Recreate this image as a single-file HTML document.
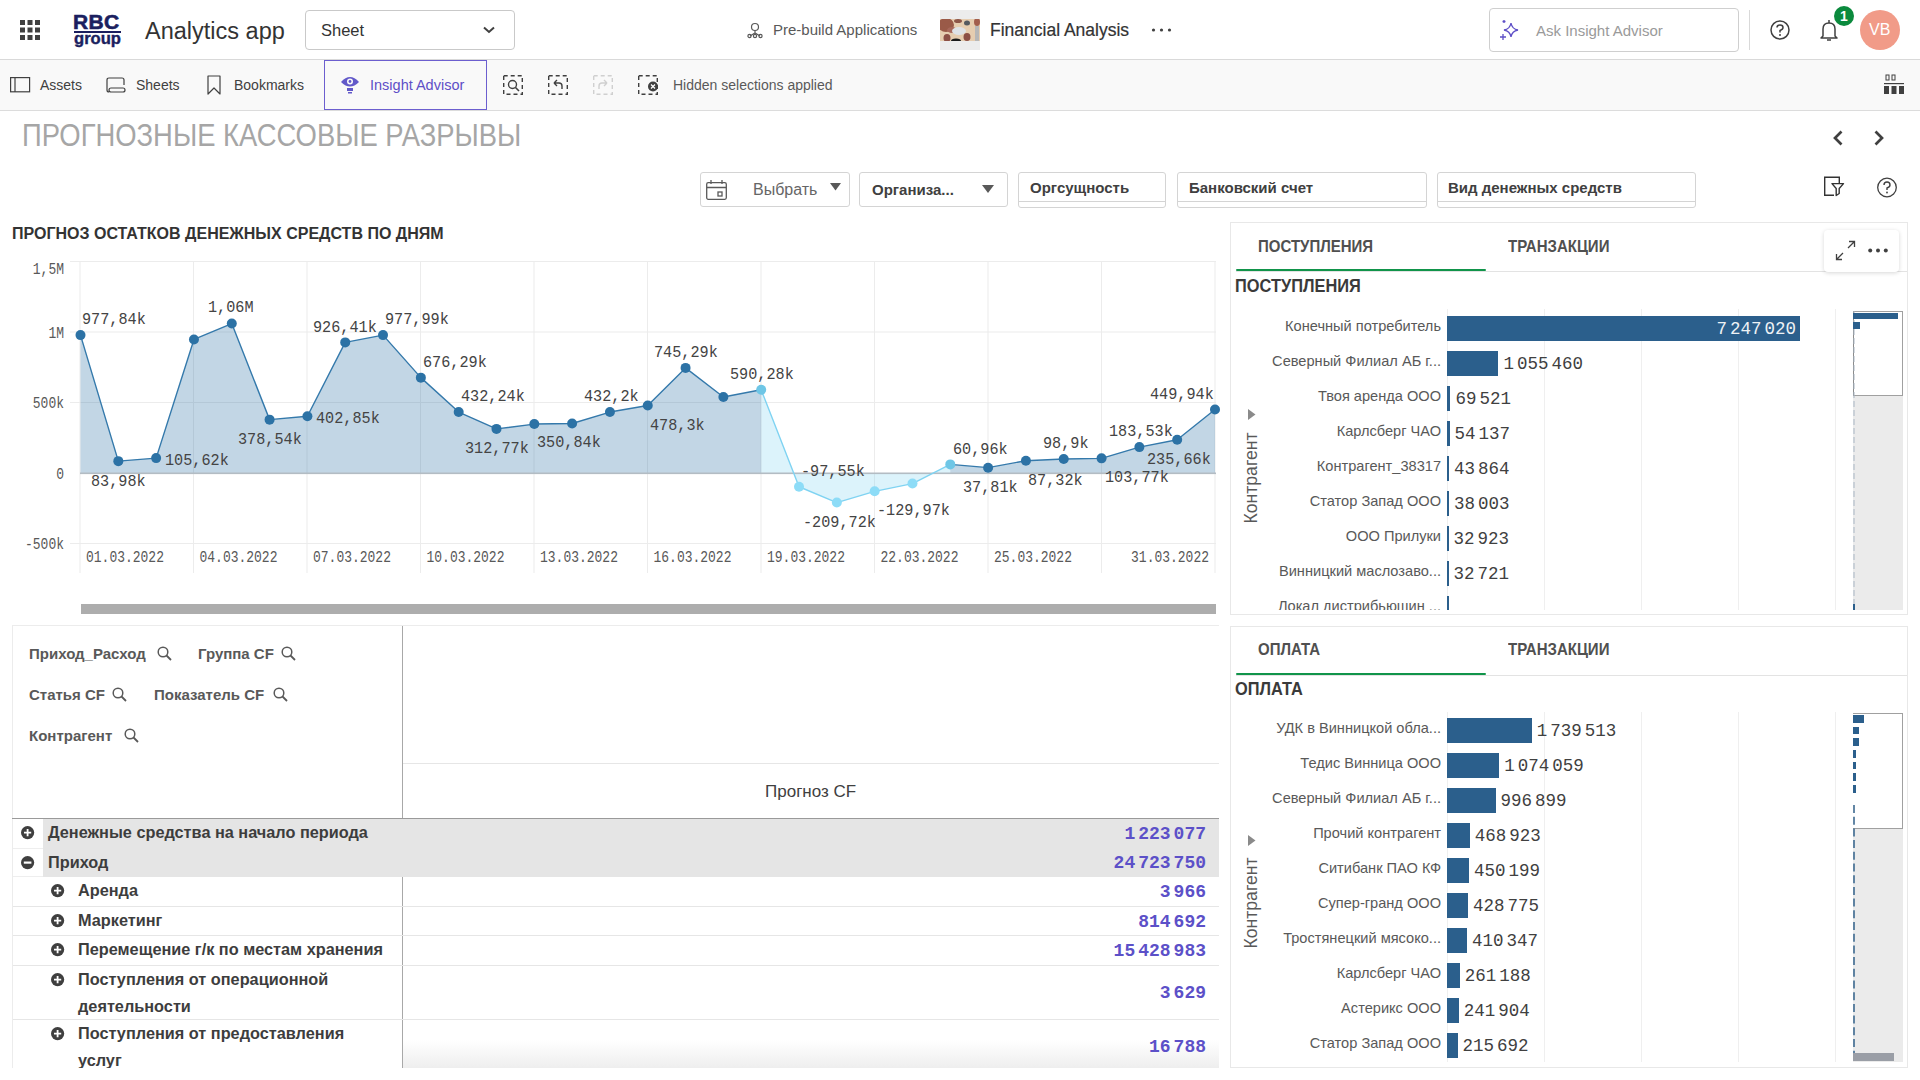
<!DOCTYPE html>
<html><head><meta charset="utf-8">
<style>
*{margin:0;padding:0;box-sizing:border-box}
html,body{width:1920px;height:1080px;overflow:hidden;background:#fff;font-family:"Liberation Sans",sans-serif;color:#404040}
.a{position:absolute}
.t{position:absolute;white-space:nowrap;line-height:1}
.m{font-family:"Liberation Mono",monospace}
.b{font-weight:bold}
svg{position:absolute;overflow:visible}
.dl{font-family:"Liberation Mono",monospace;font-size:15.2px;fill:#444}
.ax{font-family:"Liberation Mono",monospace;font-size:13px;fill:#595959}
.dt{font-family:"Liberation Mono",monospace;font-size:13px;fill:#595959}
.tab{font-size:15px;color:#505050;transform:scaleY(1.15);transform-origin:0 12.7px}
.ptitle{font-size:16.4px;color:#3a3a3a;transform:scaleY(1.09);transform-origin:0 13.9px}
.blab{font-size:14.6px;color:#595959}
.bval{font-size:17.5px;color:#404040;transform:scaleY(1.1);transform-origin:0 75%}
.sp{display:inline-block;width:3px}
.axt{font-size:17.6px;color:#595959}
.chip{font-size:15px;color:#595959}
.rowt{font-size:16.3px;line-height:27px;color:#3d3d3d}
.num{font-size:18px;color:#5c50c8}
.fl{font-size:15px;color:#404040}
</style></head><body>
<!-- HEADER -->
<div class="a" style="left:0;top:0;width:1920px;height:59px;background:#fff"></div>
<div class="a" style="left:0;top:59px;width:1920px;height:1px;background:#d9d9d9"></div>
<!-- grid icon -->
<svg style="left:20px;top:20px" width="20" height="20"><g fill="#404040">
<rect x="0" y="0" width="5" height="5"/><rect x="7.5" y="0" width="5" height="5"/><rect x="15" y="0" width="5" height="5"/>
<rect x="0" y="7.5" width="5" height="5"/><rect x="7.5" y="7.5" width="5" height="5"/><rect x="15" y="7.5" width="5" height="5"/>
<rect x="0" y="15" width="5" height="5"/><rect x="7.5" y="15" width="5" height="5"/><rect x="15" y="15" width="5" height="5"/></g></svg>
<!-- logo -->
<div class="t b" style="left:73px;top:11px;font-size:21px;color:#1b1f5f;letter-spacing:0.3px;-webkit-text-stroke:0.6px #1b1f5f">RBC</div>
<div class="a" style="left:74px;top:30.5px;width:47px;height:2px;background:#1b1f5f"></div>
<div class="t b" style="left:74px;top:31px;font-size:16.6px;color:#1b1f5f;-webkit-text-stroke:0.4px #1b1f5f">group</div>
<div class="t" id="apptitle" style="left:145px;top:20px;font-size:23.5px;color:#333">Analytics app</div>
<!-- sheet dropdown -->
<div class="a" style="left:305px;top:10px;width:210px;height:40px;border:1px solid #c9c9c9;border-radius:4px"></div>
<div class="t" style="left:321px;top:22px;font-size:16.5px;color:#333">Sheet</div>
<svg style="left:483px;top:26px" width="12" height="8"><path d="M1 1.5 L6 6 L11 1.5" stroke="#404040" stroke-width="2" fill="none"/></svg>

<!-- prebuild -->
<svg style="left:747px;top:22px" width="16" height="16"><g stroke="#595959" stroke-width="1.2" fill="none">
<circle cx="8" cy="5" r="3.5"/><path d="M8 8.5 V11 M3 14 L8 11 L13 14"/><circle cx="2.5" cy="14" r="1.6"/><circle cx="8" cy="14" r="1.6"/><circle cx="13.5" cy="14" r="1.6"/></g></svg>
<div class="t" style="left:773px;top:22px;font-size:15px;color:#595959">Pre-build Applications</div>
<div class="a" style="left:940px;top:10px;width:40px;height:40px;background:#ececec"></div>
<svg style="left:940px;top:19px;overflow:hidden" width="40" height="22" viewBox="0 0 40 22"><rect width="40" height="22" fill="#e6cdb0"/>
<ellipse cx="6" cy="6" rx="8" ry="7" fill="#9a5a48"/><ellipse cx="12" cy="11" rx="5" ry="3" fill="#a8685a"/>
<ellipse cx="19" cy="12" rx="7" ry="4" fill="#dfe2e6"/><ellipse cx="27" cy="4" rx="3" ry="2.5" fill="#555a60"/>
<ellipse cx="7" cy="19" rx="3.5" ry="4" fill="#8c4f45"/><ellipse cx="27" cy="18" rx="3.5" ry="4" fill="#8c4f45"/>
<ellipse cx="16" cy="22" rx="5" ry="2.5" fill="#1a1a1a"/><rect x="35" y="7" width="4" height="15" fill="#b7b7b7"/><ellipse cx="37" cy="3" rx="3" ry="4" fill="#a25e4d"/>
<ellipse cx="18" cy="2" rx="4" ry="2" fill="#8e5648"/></svg>
<div class="t" id="fintitle" style="left:990px;top:22px;font-size:17.5px;color:#333;-webkit-text-stroke:0.2px #333">Financial Analysis</div>
<svg style="left:1150px;top:27px" width="24" height="6"><circle cx="3.5" cy="3" r="1.6" fill="#404040"/><circle cx="11.5" cy="3" r="1.6" fill="#404040"/><circle cx="19.5" cy="3" r="1.6" fill="#404040"/></svg>

<!-- ask insight -->
<div class="a" style="left:1489px;top:8px;width:250px;height:44px;border:1px solid #cfcfcf;border-radius:4px"></div>
<svg style="left:1499px;top:19px" width="22" height="22"><g fill="none" stroke="#5e4fc7" stroke-width="1.3">
<path d="M12 4 Q13 10 19 11 Q13 12 12 18 Q11 12 5 11 Q11 10 12 4Z"/><path d="M4 15 V21 M1 18 H7"/><path d="M5 1 V4 M3.5 2.5 H6.5"/></g></svg>
<div class="t" style="left:1536px;top:23px;font-size:15px;color:#9a9a9a">Ask Insight Advisor</div>
<div class="a" style="left:1749px;top:10px;width:1px;height:40px;background:#d9d9d9"></div>
<svg style="left:1769px;top:20px" width="22" height="22"><circle cx="11" cy="10" r="9" stroke="#404040" stroke-width="1.5" fill="none"/><path d="M8 7.5 Q8 5 11 5 Q14 5 14 7.5 Q14 9.5 11 10.5 V12.5" stroke="#404040" stroke-width="1.5" fill="none"/><circle cx="11" cy="15" r="1" fill="#404040"/></svg>
<svg style="left:1819px;top:19px" width="22" height="24"><path d="M4 17 V10 Q4 4 10 4 Q16 4 16 10 V17 L18 19 H2 Z" stroke="#404040" stroke-width="1.5" fill="none" stroke-linejoin="round"/><path d="M10 1 V4 M8 21 H12" stroke="#404040" stroke-width="1.5"/></svg>
<div class="a" style="left:1834px;top:6px;width:20px;height:20px;border-radius:50%;background:#0b8a3d"></div>
<div class="t b" style="left:1840px;top:9px;font-size:14px;color:#fff">1</div>
<div class="a" style="left:1860px;top:10px;width:40px;height:40px;border-radius:50%;background:#f19b88"></div>
<div class="t" style="left:1869px;top:22px;font-size:16px;color:#fff">VB</div>

<!-- TOOLBAR -->
<div class="a" style="left:0;top:60px;width:1920px;height:50px;background:#f9f9f9"></div>
<div class="a" style="left:0;top:110px;width:1920px;height:1px;background:#dcdcdc"></div>
<svg style="left:10px;top:77px" width="20" height="16"><rect x="0.6" y="0.6" width="19" height="14.2" stroke="#404040" stroke-width="1.2" fill="none"/><path d="M5 1 V15" stroke="#404040" stroke-width="1.2"/></svg>
<div class="t" style="left:40px;top:78px;font-size:14px;color:#404040">Assets</div>
<svg style="left:106px;top:77px" width="20" height="16"><path d="M1 13 V3 Q1 1 3 1 H16 Q18 1 18 3 V8 M5 15 Q3 15 3 13 Q3 11 5 11 H17 Q19 11 19 13 Q19 15 17 15 Z M1 13 Q1 15 3 15" stroke="#404040" stroke-width="1.2" fill="none"/></svg>
<div class="t" style="left:136px;top:78px;font-size:14px;color:#404040">Sheets</div>
<svg style="left:207px;top:75px" width="14" height="20"><path d="M1 1 H13 V19 L7 13 L1 19 Z" stroke="#404040" stroke-width="1.2" fill="none" stroke-linejoin="round"/></svg>
<div class="t" style="left:234px;top:78px;font-size:14px;color:#404040">Bookmarks</div>
<div class="a" style="left:324px;top:60px;width:163px;height:50px;border:1.5px solid #6c5fcf;background:#f9f9f9"></div>
<svg style="left:339px;top:74px" width="22" height="22"><path d="M2 8 Q11 -2 20 8 Q11 17 2 8Z" fill="#6259c9"/><circle cx="11" cy="7.5" r="3" fill="#f9f9f9"/><circle cx="11" cy="7.5" r="1.4" fill="#6259c9"/><path d="M8 14 H14 V17 H8Z M9 18 H13 V19.5 H9Z" fill="#6259c9"/></svg>
<div class="t" style="left:370px;top:78px;font-size:14.5px;color:#5e4fc7">Insight Advisor</div>
<!-- selection icons -->
<svg style="left:503px;top:75px" width="20" height="20"><rect x="0.7" y="0.7" width="18.6" height="18.6" stroke="#404040" stroke-width="1.4" fill="none" stroke-dasharray="4 3"/><circle cx="9.5" cy="9.5" r="4" stroke="#404040" stroke-width="1.4" fill="none"/><path d="M12.5 12.5 L16 16" stroke="#404040" stroke-width="1.6"/></svg>
<svg style="left:548px;top:75px" width="20" height="20"><rect x="0.7" y="0.7" width="18.6" height="18.6" stroke="#404040" stroke-width="1.4" fill="none" stroke-dasharray="4 3"/><path d="M6 8 L9 5 M6 8 L9 11 M6 8 H11 Q14 8 14 11 V14" stroke="#404040" stroke-width="1.4" fill="none"/></svg>
<svg style="left:593px;top:75px" width="20" height="20"><rect x="0.7" y="0.7" width="18.6" height="18.6" stroke="#d0d0d0" stroke-width="1.4" fill="none" stroke-dasharray="4 3"/><path d="M14 8 L11 5 M14 8 L11 11 M14 8 H9 Q6 8 6 11 V14" stroke="#d0d0d0" stroke-width="1.4" fill="none"/></svg>
<svg style="left:638px;top:75px" width="20" height="20"><rect x="0.7" y="0.7" width="18.6" height="18.6" stroke="#404040" stroke-width="1.4" fill="none" stroke-dasharray="4 3"/><circle cx="15" cy="11.5" r="5" fill="#404040"/><path d="M13 9.5 L17 13.5 M17 9.5 L13 13.5" stroke="#fff" stroke-width="1.3"/></svg>
<div class="t" style="left:673px;top:78px;font-size:14px;color:#595959">Hidden selections applied</div>
<svg style="left:1884px;top:75px" width="20" height="20"><g fill="#404040"><rect x="2" y="0" width="3" height="5" fill="none" stroke="#404040" stroke-width="1"/><rect x="8" y="0" width="3" height="5" fill="none" stroke="#404040" stroke-width="1"/><rect x="0" y="8" width="20" height="1.2"/><rect x="0" y="11" width="5" height="8"/><rect x="7.5" y="11" width="5" height="8"/><rect x="15" y="11" width="5" height="8"/></g></svg>

<!-- SHEET TITLE -->
<div class="t" id="sheettitle" style="left:22px;top:122.5px;font-size:27.4px;color:#a6a6a6;transform:scaleY(1.14);transform-origin:0 23.2px">ПРОГНОЗНЫЕ КАССОВЫЕ РАЗРЫВЫ</div>
<svg style="left:1832px;top:130px" width="12" height="16"><path d="M9.5 1.5 L3 8 L9.5 14.5" stroke="#404040" stroke-width="2.7" fill="none"/></svg>
<svg style="left:1873px;top:130px" width="12" height="16"><path d="M2.5 1.5 L9 8 L2.5 14.5" stroke="#404040" stroke-width="2.7" fill="none"/></svg>

<!--FILTERS-->
<div class="a" style="left:700px;top:172px;width:150px;height:35px;border:1px solid #d4d4d4;border-radius:3px"></div>
<svg style="left:706px;top:180px" width="21" height="20"><g stroke="#595959" stroke-width="1.3" fill="none"><rect x="0.7" y="2.7" width="19.6" height="16.6" rx="1.5"/><path d="M1 7.5 H20 M5 0 V4 M16 0 V4"/><rect x="12" y="12" width="4" height="4"/></g></svg>
<div class="t" style="left:753px;top:182px;font-size:16px;color:#666" id="vybrat">Выбрать</div>
<svg style="left:830px;top:183px" width="11" height="8"><path d="M0 0 H11 L5.5 7.5Z" fill="#595959"/></svg>
<div class="a" style="left:859px;top:172px;width:149px;height:35px;border:1px solid #d4d4d4;border-radius:3px"></div>
<div class="t b fl" style="left:872px;top:182px" id="org">Организа...</div>
<svg style="left:982px;top:185px" width="12" height="8"><path d="M0 0 H12 L6 8Z" fill="#595959"/></svg>
<div class="a" style="left:1018px;top:172px;width:148px;height:36px;border:1px solid #d4d4d4;border-radius:3px"></div>
<div class="a" style="left:1019px;top:201px;width:146px;height:1px;background:#d4d4d4"></div>
<div class="t b fl" style="left:1030px;top:180px" id="orgs">Оргсущность</div>
<div class="a" style="left:1177px;top:172px;width:250px;height:36px;border:1px solid #d4d4d4;border-radius:3px"></div>
<div class="a" style="left:1178px;top:201px;width:248px;height:1px;background:#d4d4d4"></div>
<div class="t b fl" style="left:1189px;top:180px" id="bank">Банковский счет</div>
<div class="a" style="left:1437px;top:172px;width:259px;height:36px;border:1px solid #d4d4d4;border-radius:3px"></div>
<div class="a" style="left:1438px;top:201px;width:257px;height:1px;background:#d4d4d4"></div>
<div class="t b fl" style="left:1448px;top:180px" id="vid">Вид денежных средств</div>
<svg style="left:1823px;top:176px" width="22" height="21"><path d="M11 19.3 H1.7 V1.2 H16.3 V7" stroke="#333" stroke-width="1.4" fill="none"/><path d="M9 7.6 H20.5 L16.2 12.5 V17.5 L13.2 19.5 V12.5 Z" stroke="#333" stroke-width="1.4" fill="#fff" stroke-linejoin="round"/></svg>
<svg style="left:1876px;top:177px" width="22" height="21"><circle cx="11" cy="10.5" r="9.3" stroke="#404040" stroke-width="1.3" fill="none"/><path d="M8 8 Q8 5 11 5 Q14 5 14 8 Q14 10 11 11 V13" stroke="#404040" stroke-width="1.4" fill="none"/><circle cx="11" cy="15.5" r="0.9" fill="#404040"/></svg>
<div class="t b" style="left:12px;top:226px;font-size:16px;color:#333" id="ctitle">ПРОГНОЗ ОСТАТКОВ ДЕНЕЖНЫХ СРЕДСТВ ПО ДНЯМ</div>

<!--/FILTERS-->
<!--CHART-->
<svg style="left:0;top:0" width="1920" height="1080">
<rect x="70" y="261.0" width="1146" height="1" fill="#ececec"/>
<rect x="70" y="331.5" width="1146" height="1" fill="#ececec"/>
<rect x="70" y="402.0" width="1146" height="1" fill="#ececec"/>
<rect x="70" y="543.0" width="1146" height="1" fill="#ececec"/>
<rect x="79.5" y="262" width="1" height="311" fill="#ececec"/>
<rect x="193.0" y="262" width="1" height="311" fill="#ececec"/>
<rect x="306.5" y="262" width="1" height="311" fill="#ececec"/>
<rect x="420.0" y="262" width="1" height="311" fill="#ececec"/>
<rect x="533.5" y="262" width="1" height="311" fill="#ececec"/>
<rect x="647.0" y="262" width="1" height="311" fill="#ececec"/>
<rect x="760.5" y="262" width="1" height="311" fill="#ececec"/>
<rect x="874.0" y="262" width="1" height="311" fill="#ececec"/>
<rect x="987.5" y="262" width="1" height="311" fill="#ececec"/>
<rect x="1101.0" y="262" width="1" height="311" fill="#ececec"/>
<rect x="1214.5" y="262" width="1" height="311" fill="#ececec"/>
<path d="M80.50,473.0 L80.50,335.12 L118.32,461.16 L156.13,458.11 L193.95,339.47 L231.77,323.54 L269.58,419.63 L307.40,416.20 L345.22,342.38 L383.03,335.10 L420.85,377.64 L458.67,412.05 L496.48,428.90 L534.30,424.07 L572.12,423.53 L609.93,412.06 L647.75,405.56 L685.57,367.91 L723.38,397.00 L761.20,389.77 L761.20,473.0 Z" fill="rgba(44,114,165,0.29)"/>
<path d="M761.20,473.0 L761.20,389.77 L799.02,486.75 L836.83,502.57 L874.65,491.33 L912.47,483.57 L950.28,464.40 L950.28,473.0 Z" fill="rgba(127,211,242,0.27)"/>
<path d="M950.28,473.0 L950.28,464.40 L988.10,467.67 L1025.92,460.69 L1063.73,459.06 L1101.55,458.37 L1139.37,447.12 L1177.18,439.77 L1215.00,409.56 L1215.00,473.0 Z" fill="rgba(44,114,165,0.29)"/>
<rect x="80" y="472.5" width="1136" height="1.6" fill="#b3bcc3"/>
<path d="M80.50,335.12 L118.32,461.16 L156.13,458.11 L193.95,339.47 L231.77,323.54 L269.58,419.63 L307.40,416.20 L345.22,342.38 L383.03,335.10 L420.85,377.64 L458.67,412.05 L496.48,428.90 L534.30,424.07 L572.12,423.53 L609.93,412.06 L647.75,405.56 L685.57,367.91 L723.38,397.00 L761.20,389.77" fill="none" stroke="#3479ab" stroke-width="1.4" stroke-linejoin="round"/>
<path d="M761.20,389.77 L799.02,486.75 L836.83,502.57 L874.65,491.33 L912.47,483.57 L950.28,464.40" fill="none" stroke="#7fd3f2" stroke-width="1.4" stroke-linejoin="round"/>
<path d="M950.28,464.40 L988.10,467.67 L1025.92,460.69 L1063.73,459.06 L1101.55,458.37 L1139.37,447.12 L1177.18,439.77 L1215.00,409.56" fill="none" stroke="#3479ab" stroke-width="1.4" stroke-linejoin="round"/>
<circle cx="80.50" cy="335.12" r="5" fill="#2c72a5"/>
<circle cx="118.32" cy="461.16" r="5" fill="#2c72a5"/>
<circle cx="156.13" cy="458.11" r="5" fill="#2c72a5"/>
<circle cx="193.95" cy="339.47" r="5" fill="#2c72a5"/>
<circle cx="231.77" cy="323.54" r="5" fill="#2c72a5"/>
<circle cx="269.58" cy="419.63" r="5" fill="#2c72a5"/>
<circle cx="307.40" cy="416.20" r="5" fill="#2c72a5"/>
<circle cx="345.22" cy="342.38" r="5" fill="#2c72a5"/>
<circle cx="383.03" cy="335.10" r="5" fill="#2c72a5"/>
<circle cx="420.85" cy="377.64" r="5" fill="#2c72a5"/>
<circle cx="458.67" cy="412.05" r="5" fill="#2c72a5"/>
<circle cx="496.48" cy="428.90" r="5" fill="#2c72a5"/>
<circle cx="534.30" cy="424.07" r="5" fill="#2c72a5"/>
<circle cx="572.12" cy="423.53" r="5" fill="#2c72a5"/>
<circle cx="609.93" cy="412.06" r="5" fill="#2c72a5"/>
<circle cx="647.75" cy="405.56" r="5" fill="#2c72a5"/>
<circle cx="685.57" cy="367.91" r="5" fill="#2c72a5"/>
<circle cx="723.38" cy="397.00" r="5" fill="#2c72a5"/>
<circle cx="761.20" cy="389.77" r="5" fill="#6ec6e6"/>
<circle cx="799.02" cy="486.75" r="5" fill="#8ddcf7"/>
<circle cx="836.83" cy="502.57" r="5" fill="#8ddcf7"/>
<circle cx="874.65" cy="491.33" r="5" fill="#8ddcf7"/>
<circle cx="912.47" cy="483.57" r="5" fill="#8ddcf7"/>
<circle cx="950.28" cy="464.40" r="5" fill="#6ec6e6"/>
<circle cx="988.10" cy="467.67" r="5" fill="#2c72a5"/>
<circle cx="1025.92" cy="460.69" r="5" fill="#2c72a5"/>
<circle cx="1063.73" cy="459.06" r="5" fill="#2c72a5"/>
<circle cx="1101.55" cy="458.37" r="5" fill="#2c72a5"/>
<circle cx="1139.37" cy="447.12" r="5" fill="#2c72a5"/>
<circle cx="1177.18" cy="439.77" r="5" fill="#2c72a5"/>
<circle cx="1215.00" cy="409.56" r="5" fill="#2c72a5"/>
<text transform="translate(82,324) scale(1,1.12)" class="dl">977,84k</text>
<text transform="translate(91,486) scale(1,1.12)" class="dl">83,98k</text>
<text transform="translate(165,465) scale(1,1.12)" class="dl">105,62k</text>
<text transform="translate(208,312) scale(1,1.12)" class="dl">1,06M</text>
<text transform="translate(238,444) scale(1,1.12)" class="dl">378,54k</text>
<text transform="translate(316,423) scale(1,1.12)" class="dl">402,85k</text>
<text transform="translate(313,332) scale(1,1.12)" class="dl">926,41k</text>
<text transform="translate(385,324) scale(1,1.12)" class="dl">977,99k</text>
<text transform="translate(423,367) scale(1,1.12)" class="dl">676,29k</text>
<text transform="translate(461,401) scale(1,1.12)" class="dl">432,24k</text>
<text transform="translate(465,453) scale(1,1.12)" class="dl">312,77k</text>
<text transform="translate(537,447) scale(1,1.12)" class="dl">350,84k</text>
<text transform="translate(584,401) scale(1,1.12)" class="dl">432,2k</text>
<text transform="translate(650,430) scale(1,1.12)" class="dl">478,3k</text>
<text transform="translate(654,357) scale(1,1.12)" class="dl">745,29k</text>
<text transform="translate(730,379) scale(1,1.12)" class="dl">590,28k</text>
<text transform="translate(801,476) scale(1,1.12)" class="dl">-97,55k</text>
<text transform="translate(803,527) scale(1,1.12)" class="dl">-209,72k</text>
<text transform="translate(877,515) scale(1,1.12)" class="dl">-129,97k</text>
<text transform="translate(953,454) scale(1,1.12)" class="dl">60,96k</text>
<text transform="translate(963,492) scale(1,1.12)" class="dl">37,81k</text>
<text transform="translate(1028,485) scale(1,1.12)" class="dl">87,32k</text>
<text transform="translate(1043,448) scale(1,1.12)" class="dl">98,9k</text>
<text transform="translate(1105,482) scale(1,1.12)" class="dl">103,77k</text>
<text transform="translate(1109,436) scale(1,1.12)" class="dl">183,53k</text>
<text transform="translate(1147,464) scale(1,1.12)" class="dl">235,66k</text>
<text transform="translate(1150,399) scale(1,1.12)" class="dl">449,94k</text>
<text transform="translate(64,274) scale(1,1.2)" class="ax" text-anchor="end">1,5M</text>
<text transform="translate(64,338) scale(1,1.2)" class="ax" text-anchor="end">1M</text>
<text transform="translate(64,408) scale(1,1.2)" class="ax" text-anchor="end">500k</text>
<text transform="translate(64,479) scale(1,1.2)" class="ax" text-anchor="end">0</text>
<text transform="translate(64,549) scale(1,1.2)" class="ax" text-anchor="end">-500k</text>
<text transform="translate(86.0,562) scale(1,1.2)" class="dt">01.03.2022</text>
<text transform="translate(199.5,562) scale(1,1.2)" class="dt">04.03.2022</text>
<text transform="translate(313.0,562) scale(1,1.2)" class="dt">07.03.2022</text>
<text transform="translate(426.5,562) scale(1,1.2)" class="dt">10.03.2022</text>
<text transform="translate(540.0,562) scale(1,1.2)" class="dt">13.03.2022</text>
<text transform="translate(653.5,562) scale(1,1.2)" class="dt">16.03.2022</text>
<text transform="translate(767.0,562) scale(1,1.2)" class="dt">19.03.2022</text>
<text transform="translate(880.5,562) scale(1,1.2)" class="dt">22.03.2022</text>
<text transform="translate(994.0,562) scale(1,1.2)" class="dt">25.03.2022</text>
<text transform="translate(1209,562) scale(1,1.2)" class="dt" text-anchor="end">31.03.2022</text>
</svg>
<div class="a" style="left:81px;top:604px;width:1135px;height:10px;background:#adadad"></div>
<!--/CHART-->
<!--RIGHTTOP-->
<div class="a" style="left:1230px;top:222px;width:678px;height:393px;border:1px solid #e8e8e8;background:#fff"></div>
<div class="t b tab" style="left:1258px;top:239.0px">ПОСТУПЛЕНИЯ</div>
<div class="t b tab" style="left:1508px;top:239.0px">ТРАНЗАКЦИИ</div>
<div class="a" style="left:1236px;top:271px;width:671px;height:1px;background:#e3e3e3"></div>
<div class="a" style="left:1236px;top:269px;width:250px;height:2px;background:#11944a;border-radius:1px"></div>
<div class="t b ptitle" style="left:1235px;top:278.1px">ПОСТУПЛЕНИЯ</div>
<div class="a" style="left:1446.5px;top:309px;width:1px;height:301px;background:#efefef"></div>
<div class="a" style="left:1543.5px;top:309px;width:1px;height:301px;background:#efefef"></div>
<div class="a" style="left:1640.5px;top:309px;width:1px;height:301px;background:#efefef"></div>
<div class="a" style="left:1737.5px;top:309px;width:1px;height:301px;background:#efefef"></div>
<div class="a" style="left:1834.5px;top:309px;width:1px;height:301px;background:#efefef"></div>
<div class="a" style="left:1447px;top:316px;width:353.0px;height:24.5px;background:#2b5f8c"></div>
<div class="t blab" style="right:479px;top:319px">Конечный потребитель</div>
<div class="t m bval" style="right:124px;top:321px;color:#eef2f5">7<i class="sp"></i>247<i class="sp"></i>020</div>
<div class="a" style="left:1447px;top:351px;width:51.4px;height:24.5px;background:#2b5f8c"></div>
<div class="t blab" style="right:479px;top:354px">Северный Филиал АБ г...</div>
<div class="t m bval" style="left:1503.4px;top:356px">1<i class="sp"></i>055<i class="sp"></i>460</div>
<div class="a" style="left:1447px;top:386px;width:3.4px;height:24.5px;background:#2b5f8c"></div>
<div class="t blab" style="right:479px;top:389px">Твоя аренда ООО</div>
<div class="t m bval" style="left:1455.4px;top:391px">69<i class="sp"></i>521</div>
<div class="a" style="left:1447px;top:421px;width:2.6px;height:24.5px;background:#2b5f8c"></div>
<div class="t blab" style="right:479px;top:424px">Карлсберг ЧАО</div>
<div class="t m bval" style="left:1454.6px;top:426px">54<i class="sp"></i>137</div>
<div class="a" style="left:1447px;top:456px;width:2.1px;height:24.5px;background:#2b5f8c"></div>
<div class="t blab" style="right:479px;top:459px">Контрагент_38317</div>
<div class="t m bval" style="left:1454.1px;top:461px">43<i class="sp"></i>864</div>
<div class="a" style="left:1447px;top:491px;width:1.9px;height:24.5px;background:#2b5f8c"></div>
<div class="t blab" style="right:479px;top:494px">Статор Запад ООО</div>
<div class="t m bval" style="left:1453.9px;top:496px">38<i class="sp"></i>003</div>
<div class="a" style="left:1447px;top:526px;width:1.6px;height:24.5px;background:#2b5f8c"></div>
<div class="t blab" style="right:479px;top:529px">ООО Прилуки</div>
<div class="t m bval" style="left:1453.6px;top:531px">32<i class="sp"></i>923</div>
<div class="a" style="left:1447px;top:561px;width:1.6px;height:24.5px;background:#2b5f8c"></div>
<div class="t blab" style="right:479px;top:564px">Винницкий маслозаво...</div>
<div class="t m bval" style="left:1453.6px;top:566px">32<i class="sp"></i>721</div>
<div class="a" style="left:1447px;top:596px;width:1.6px;height:14px;background:#2b5f8c"></div>
<div class="t blab" style="right:479px;top:599px">Локал дистрибьюшин ...</div>
<div class="a" style="left:1232px;top:610px;width:620px;height:4px;background:#fff"></div>
<div class="t axt" style="left:1252px;top:478px;transform:translate(-50%,-50%) rotate(-90deg)">Контрагент</div>
<svg style="left:1248px;top:409px" width="8" height="11"><path d="M0 0 L7.5 5.5 L0 11Z" fill="#8a8a8a"/></svg>
<div class="a" style="left:1853px;top:311px;width:50px;height:299px;background:#ebebeb"></div>
<div class="a" style="left:1853px;top:311px;width:50px;height:85px;background:#fff;border:1px solid #a0a0a0;border-left:1px solid #8c8c8c"></div>
<svg style="left:1853px;top:311px" width="3" height="299"><line x1="1" y1="0" x2="1" y2="299" stroke="#a9b6c4" stroke-width="1" stroke-dasharray="6 3"/></svg>
<div class="a" style="left:1853px;top:313px;width:45px;height:6.3px;background:#2b5f8c"></div>
<div class="a" style="left:1853px;top:322.2px;width:6.7px;height:7.2px;background:#2b5f8c"></div>
<div class="a" style="left:1853px;top:604px;width:1.5px;height:6px;background:#2b5f8c"></div>
<div class="a" style="left:1824px;top:230px;width:75px;height:42px;background:#fff;border-radius:4px;box-shadow:0 1px 4px rgba(0,0,0,0.16)"></div>
<svg style="left:1835px;top:240px" width="22" height="22"><g stroke="#404040" stroke-width="1.3" fill="none"><path d="M13 8 L19.5 1.5 M14 1.5 H19.5 V7"/><path d="M8 13 L1.5 19.5 M1.5 14 V19.5 H7"/></g></svg>
<svg style="left:1868px;top:248px" width="20" height="5"><circle cx="2.2" cy="2.5" r="2" fill="#404040"/><circle cx="10" cy="2.5" r="2" fill="#404040"/><circle cx="17.8" cy="2.5" r="2" fill="#404040"/></svg>
<div class="a" style="left:1230px;top:626px;width:678px;height:442px;border:1px solid #e8e8e8;background:#fff"></div>
<div class="t b tab" style="left:1258px;top:642.0px">ОПЛАТА</div>
<div class="t b tab" style="left:1508px;top:642.0px">ТРАНЗАКЦИИ</div>
<div class="a" style="left:1236px;top:675px;width:671px;height:1px;background:#e3e3e3"></div>
<div class="a" style="left:1236px;top:673px;width:250px;height:2px;background:#11944a;border-radius:1px"></div>
<div class="t b ptitle" style="left:1235px;top:680.9px">ОПЛАТА</div>
<div class="a" style="left:1446.5px;top:712px;width:1px;height:350px;background:#efefef"></div>
<div class="a" style="left:1543.5px;top:712px;width:1px;height:350px;background:#efefef"></div>
<div class="a" style="left:1640.5px;top:712px;width:1px;height:350px;background:#efefef"></div>
<div class="a" style="left:1737.5px;top:712px;width:1px;height:350px;background:#efefef"></div>
<div class="a" style="left:1834.5px;top:712px;width:1px;height:350px;background:#efefef"></div>
<div class="a" style="left:1447px;top:718px;width:84.7px;height:24.5px;background:#2b5f8c"></div>
<div class="t blab" style="right:479px;top:721px">УДК в Винницкой обла...</div>
<div class="t m bval" style="left:1536.7px;top:723px">1<i class="sp"></i>739<i class="sp"></i>513</div>
<div class="a" style="left:1447px;top:753px;width:52.3px;height:24.5px;background:#2b5f8c"></div>
<div class="t blab" style="right:479px;top:756px">Тедис Винница ООО</div>
<div class="t m bval" style="left:1504.3px;top:758px">1<i class="sp"></i>074<i class="sp"></i>059</div>
<div class="a" style="left:1447px;top:788px;width:48.6px;height:24.5px;background:#2b5f8c"></div>
<div class="t blab" style="right:479px;top:791px">Северный Филиал АБ г...</div>
<div class="t m bval" style="left:1500.6px;top:793px">996<i class="sp"></i>899</div>
<div class="a" style="left:1447px;top:823px;width:22.8px;height:24.5px;background:#2b5f8c"></div>
<div class="t blab" style="right:479px;top:826px">Прочий контрагент</div>
<div class="t m bval" style="left:1474.8px;top:828px">468<i class="sp"></i>923</div>
<div class="a" style="left:1447px;top:858px;width:21.9px;height:24.5px;background:#2b5f8c"></div>
<div class="t blab" style="right:479px;top:861px">Ситибанк ПАО КФ</div>
<div class="t m bval" style="left:1473.9px;top:863px">450<i class="sp"></i>199</div>
<div class="a" style="left:1447px;top:893px;width:20.9px;height:24.5px;background:#2b5f8c"></div>
<div class="t blab" style="right:479px;top:896px">Супер-гранд ООО</div>
<div class="t m bval" style="left:1472.9px;top:898px">428<i class="sp"></i>775</div>
<div class="a" style="left:1447px;top:928px;width:20.0px;height:24.5px;background:#2b5f8c"></div>
<div class="t blab" style="right:479px;top:931px">Тростянецкий мясоко...</div>
<div class="t m bval" style="left:1472.0px;top:933px">410<i class="sp"></i>347</div>
<div class="a" style="left:1447px;top:963px;width:12.7px;height:24.5px;background:#2b5f8c"></div>
<div class="t blab" style="right:479px;top:966px">Карлсберг ЧАО</div>
<div class="t m bval" style="left:1464.7px;top:968px">261<i class="sp"></i>188</div>
<div class="a" style="left:1447px;top:998px;width:11.8px;height:24.5px;background:#2b5f8c"></div>
<div class="t blab" style="right:479px;top:1001px">Астерикс ООО</div>
<div class="t m bval" style="left:1463.8px;top:1003px">241<i class="sp"></i>904</div>
<div class="a" style="left:1447px;top:1033px;width:10.5px;height:24.5px;background:#2b5f8c"></div>
<div class="t blab" style="right:479px;top:1036px">Статор Запад ООО</div>
<div class="t m bval" style="left:1462.5px;top:1038px">215<i class="sp"></i>692</div>
<div class="a" style="left:1232px;top:1062px;width:620px;height:5px;background:#fff"></div>
<div class="t axt" style="left:1252px;top:903px;transform:translate(-50%,-50%) rotate(-90deg)">Контрагент</div>
<svg style="left:1248px;top:835px" width="8" height="11"><path d="M0 0 L7.5 5.5 L0 11Z" fill="#8a8a8a"/></svg>
<div class="a" style="left:1853px;top:713px;width:50px;height:349px;background:#ebebeb"></div>
<div class="a" style="left:1853px;top:713px;width:50px;height:116px;background:#fff;border:1px solid #a0a0a0;border-left:none"></div>
<svg style="left:1853px;top:713px" width="3" height="349"><line x1="1" y1="92" x2="1" y2="349" stroke="#3d6990" stroke-width="1.6" stroke-dasharray="8 3.7"/></svg>
<div class="a" style="left:1853px;top:715px;width:10.6px;height:7.7px;background:#2b5f8c"></div>
<div class="a" style="left:1853px;top:726.5px;width:6.3px;height:7.7px;background:#2b5f8c"></div>
<div class="a" style="left:1853px;top:738.2px;width:5.6px;height:7.7px;background:#2b5f8c"></div>
<div class="a" style="left:1853px;top:750px;width:2.6px;height:7.7px;background:#2b5f8c"></div>
<div class="a" style="left:1853px;top:761.7px;width:2.6px;height:7.7px;background:#2b5f8c"></div>
<div class="a" style="left:1853px;top:773.4px;width:2.6px;height:7.7px;background:#2b5f8c"></div>
<div class="a" style="left:1853px;top:785px;width:2.6px;height:7.7px;background:#2b5f8c"></div>
<div class="a" style="left:1853px;top:1053px;width:41px;height:8px;background:#9a9ea6"></div>
<!--/RIGHTTOP-->
<!--TABLE-->
<div class="a" style="left:12px;top:625px;width:1207px;height:1px;background:#ececec"></div>
<div class="a" style="left:12px;top:625px;width:1px;height:443px;background:#ececec"></div>
<div class="a" style="left:402px;top:626px;width:1px;height:442px;background:#a8a8a8"></div>
<div class="a" style="left:403px;top:763px;width:816px;height:1px;background:#e6e6e6"></div>
<div class="t" style="left:765px;top:783px;font-size:17px;color:#404040" id="progcf">Прогноз CF</div>
<div class="t b chip" style="left:29px;top:646px">Приход_Расход</div>
<div class="t b chip" style="left:198px;top:646px">Группа CF</div>
<div class="t b chip" style="left:29px;top:687px">Статья CF</div>
<div class="t b chip" style="left:154px;top:687px">Показатель CF</div>
<div class="t b chip" style="left:29px;top:728px">Контрагент</div>
<svg style="left:157px;top:646px" width="15" height="15"><circle cx="6" cy="6" r="4.8" stroke="#595959" stroke-width="1.5" fill="none"/><path d="M9.5 9.5 L14 14" stroke="#595959" stroke-width="1.8"/></svg>
<svg style="left:281px;top:646px" width="15" height="15"><circle cx="6" cy="6" r="4.8" stroke="#595959" stroke-width="1.5" fill="none"/><path d="M9.5 9.5 L14 14" stroke="#595959" stroke-width="1.8"/></svg>
<svg style="left:112px;top:687px" width="15" height="15"><circle cx="6" cy="6" r="4.8" stroke="#595959" stroke-width="1.5" fill="none"/><path d="M9.5 9.5 L14 14" stroke="#595959" stroke-width="1.8"/></svg>
<svg style="left:273px;top:687px" width="15" height="15"><circle cx="6" cy="6" r="4.8" stroke="#595959" stroke-width="1.5" fill="none"/><path d="M9.5 9.5 L14 14" stroke="#595959" stroke-width="1.8"/></svg>
<svg style="left:124px;top:728px" width="15" height="15"><circle cx="6" cy="6" r="4.8" stroke="#595959" stroke-width="1.5" fill="none"/><path d="M9.5 9.5 L14 14" stroke="#595959" stroke-width="1.8"/></svg>
<div class="a" style="left:12px;top:818px;width:1207px;height:1px;background:#9a9a9a"></div>
<div class="a" style="left:403px;top:1040px;width:816px;height:28px;background:linear-gradient(#fff0,#eeeeee)"></div>
<div class="a" style="left:43px;top:819px;width:1176px;height:30px;background:#e5e5e5"></div>
<div class="a" style="left:13px;top:848px;width:30px;height:1px;background:#eeeeee"></div>
<svg style="left:20.9px;top:825.9px" width="13.2" height="13.2"><circle cx="6.6" cy="6.6" r="6.6" fill="#3f3f3f"/><path d="M3 6.6 H10.2 M6.6 3 V10.2" stroke="#fff" stroke-width="1.8"/></svg>
<div class="a b rowt" style="left:48px;top:818.5px">Денежные средства на начало периода</div>
<div class="t m b num" style="right:714px;top:825.0px">1<i class="sp"></i>223<i class="sp"></i>077</div>
<div class="a" style="left:43px;top:849px;width:1176px;height:28px;background:#e5e5e5"></div>
<div class="a" style="left:13px;top:876px;width:30px;height:1px;background:#eeeeee"></div>
<svg style="left:20.9px;top:855.9px" width="13.2" height="13.2"><circle cx="6.6" cy="6.6" r="6.6" fill="#3f3f3f"/><path d="M2.8 6.6 H10.4" stroke="#fff" stroke-width="2.2"/></svg>
<div class="a b rowt" style="left:48px;top:848.5px">Приход</div>
<div class="t m b num" style="right:714px;top:854.0px">24<i class="sp"></i>723<i class="sp"></i>750</div>
<div class="a" style="left:13px;top:906px;width:1206px;height:1px;background:#e6e6e6"></div>
<svg style="left:50.9px;top:883.9px" width="13.2" height="13.2"><circle cx="6.6" cy="6.6" r="6.6" fill="#3f3f3f"/><path d="M3 6.6 H10.2 M6.6 3 V10.2" stroke="#fff" stroke-width="1.8"/></svg>
<div class="a b rowt" style="left:78px;top:876.5px">Аренда</div>
<div class="t m b num" style="right:714px;top:883.0px">3<i class="sp"></i>966</div>
<div class="a" style="left:13px;top:935px;width:1206px;height:1px;background:#e6e6e6"></div>
<svg style="left:50.9px;top:913.9px" width="13.2" height="13.2"><circle cx="6.6" cy="6.6" r="6.6" fill="#3f3f3f"/><path d="M3 6.6 H10.2 M6.6 3 V10.2" stroke="#fff" stroke-width="1.8"/></svg>
<div class="a b rowt" style="left:78px;top:906.5px">Маркетинг</div>
<div class="t m b num" style="right:714px;top:912.5px">814<i class="sp"></i>692</div>
<div class="a" style="left:13px;top:965px;width:1206px;height:1px;background:#e6e6e6"></div>
<svg style="left:50.9px;top:942.9px" width="13.2" height="13.2"><circle cx="6.6" cy="6.6" r="6.6" fill="#3f3f3f"/><path d="M3 6.6 H10.2 M6.6 3 V10.2" stroke="#fff" stroke-width="1.8"/></svg>
<div class="a b rowt" style="left:78px;top:935.5px">Перемещение г/к по местам хранения</div>
<div class="t m b num" style="right:714px;top:942.0px">15<i class="sp"></i>428<i class="sp"></i>983</div>
<div class="a" style="left:13px;top:1019px;width:1206px;height:1px;background:#e6e6e6"></div>
<svg style="left:50.9px;top:972.9px" width="13.2" height="13.2"><circle cx="6.6" cy="6.6" r="6.6" fill="#3f3f3f"/><path d="M3 6.6 H10.2 M6.6 3 V10.2" stroke="#fff" stroke-width="1.8"/></svg>
<div class="a b rowt" style="left:78px;top:965.5px">Поступления от операционной<br>деятельности</div>
<div class="t m b num" style="right:714px;top:984.0px">3<i class="sp"></i>629</div>
<div class="a" style="left:13px;top:1073px;width:1206px;height:1px;background:#e6e6e6"></div>
<svg style="left:50.9px;top:1026.9px" width="13.2" height="13.2"><circle cx="6.6" cy="6.6" r="6.6" fill="#3f3f3f"/><path d="M3 6.6 H10.2 M6.6 3 V10.2" stroke="#fff" stroke-width="1.8"/></svg>
<div class="a b rowt" style="left:78px;top:1019.5px">Поступления от предоставления<br>услуг</div>
<div class="t m b num" style="right:714px;top:1038.0px">16<i class="sp"></i>788</div>
<div class="a" style="left:0;top:1068px;width:1225px;height:12px;background:#fff"></div>
<!--/TABLE-->
<!--RIGHTBOTTOM-->
</body></html>
